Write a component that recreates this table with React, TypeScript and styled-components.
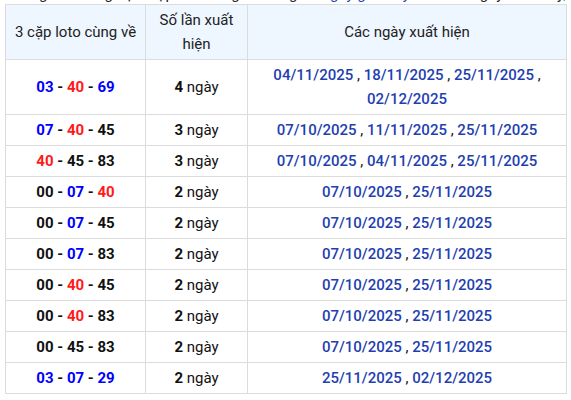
import React from "react";
import styled, { createGlobalStyle } from "styled-components";

const Global = createGlobalStyle`
  html, body { margin: 0; padding: 0; background: #fff; }
  body { font-family: Roboto, "Noto Sans", "Liberation Sans", sans-serif; color: #222; }
`;

const Page = styled.div`
  padding: 0 5px;
  width: 561px;
`;

const Intro = styled.p`
  margin: -16px 0 0;
  font-size: 15px;
  line-height: 20px;
  height: 20px;
  white-space: nowrap;
  overflow: hidden;
  color: #222;
`;

const IntroLink = styled.span`
  color: #1f3fb0;
`;

const Table = styled.table`
  width: 561px;
  border-collapse: collapse;
  table-layout: fixed;
  font-size: 15px;
  line-height: 24px;
`;

const Col = styled.col<{ $w: number }>`
  width: ${(p) => p.$w}px;
`;

const Head = styled.th`
  box-sizing: border-box;
  background: #eef6ff;
  border: 1px solid #dcdcdc;
  font-weight: 400;
  padding: 3px 6px;
  color: #222;
  text-align: center;
  vertical-align: middle;
`;

const Cell = styled.td`
  box-sizing: border-box;
  border: 1px solid #dcdcdc;
  padding: 3px 6px;
  text-align: center;
  vertical-align: middle;
  color: #111;
`;

const Num = styled.span<{ $c: "b" | "r" | "k" }>`
  font-weight: 700;
  color: ${(p) => (p.$c === "b" ? "#0000ff" : p.$c === "r" ? "#ff1a1a" : "#111")};
`;

const Dash = styled.span`
  font-weight: 700;
  color: #111;
`;

const Count = styled.b`
  font-weight: 700;
`;

const DateText = styled.span`
  color: #1f3fb0;
  font-weight: 500;
`;

type C = "b" | "r" | "k";
const rows: { nums: [string, C][]; count: number; dates: string[] }[] = [
  { nums: [["03", "b"], ["40", "r"], ["69", "b"]], count: 4, dates: ["04/11/2025", "18/11/2025", "25/11/2025", "02/12/2025"] },
  { nums: [["07", "b"], ["40", "r"], ["45", "k"]], count: 3, dates: ["07/10/2025", "11/11/2025", "25/11/2025"] },
  { nums: [["40", "r"], ["45", "k"], ["83", "k"]], count: 3, dates: ["07/10/2025", "04/11/2025", "25/11/2025"] },
  { nums: [["00", "k"], ["07", "b"], ["40", "r"]], count: 2, dates: ["07/10/2025", "25/11/2025"] },
  { nums: [["00", "k"], ["07", "b"], ["45", "k"]], count: 2, dates: ["07/10/2025", "25/11/2025"] },
  { nums: [["00", "k"], ["07", "b"], ["83", "k"]], count: 2, dates: ["07/10/2025", "25/11/2025"] },
  { nums: [["00", "k"], ["40", "r"], ["45", "k"]], count: 2, dates: ["07/10/2025", "25/11/2025"] },
  { nums: [["00", "k"], ["40", "r"], ["83", "k"]], count: 2, dates: ["07/10/2025", "25/11/2025"] },
  { nums: [["00", "k"], ["45", "k"], ["83", "k"]], count: 2, dates: ["07/10/2025", "25/11/2025"] },
  { nums: [["03", "b"], ["07", "b"], ["29", "b"]], count: 2, dates: ["25/11/2025", "02/12/2025"] },
];

export default function App() {
  return (
    <>
      <Global />
      <Page>
        <Intro>
          Thống kê những bộ 3 cặp loto cùng về trong <IntroLink>30 ngày gần đây</IntroLink> tính đến ngày hôm nay, kèm số ngày
        </Intro>
        <Table>
          <colgroup>
            <Col $w={140} />
            <Col $w={102} />
            <Col $w={319} />
          </colgroup>
          <thead>
            <tr>
              <Head>3 cặp loto cùng về</Head>
              <Head>Số lần xuất hiện</Head>
              <Head>Các ngày xuất hiện</Head>
            </tr>
          </thead>
          <tbody>
            {rows.map((r, i) => (
              <tr key={i}>
                <Cell>
                  {r.nums.map(([n, c], j) => (
                    <React.Fragment key={j}>
                      {j > 0 && <Dash> - </Dash>}
                      <Num $c={c}>{n}</Num>
                    </React.Fragment>
                  ))}
                </Cell>
                <Cell>
                  <Count>{r.count}</Count> ngày
                </Cell>
                <Cell>
                  {r.dates.map((d, j) => (
                    <React.Fragment key={j}>
                      {j > 0 && " , "}
                      <DateText>{d}</DateText>
                    </React.Fragment>
                  ))}
                </Cell>
              </tr>
            ))}
          </tbody>
        </Table>
      </Page>
    </>
  );
}
